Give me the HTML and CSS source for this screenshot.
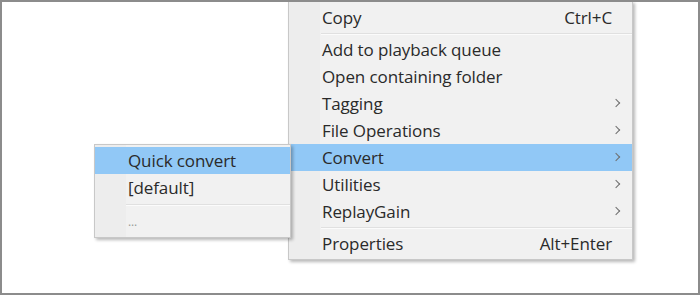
FILE: index.html
```html
<!DOCTYPE html>
<html lang="en">
<head>
    <meta charset="UTF-8">
    <title>Context menu - Convert</title>
    <link rel="stylesheet" href="styles.css">
</head>
<body>
    <div class="frame">
        <ul class="menu main-menu">
            <li class="item"><span class="label">Copy</span><span class="key">Ctrl+C</span></li>
            <li class="sep"></li>
            <li class="item"><span class="label">Add to playback queue</span></li>
            <li class="item"><span class="label">Open containing folder</span></li>
            <li class="item sub"><span class="label">Tagging</span></li>
            <li class="item sub"><span class="label">File Operations</span></li>
            <li class="item sub active"><span class="label">Convert</span></li>
            <li class="item sub"><span class="label">Utilities</span></li>
            <li class="item sub"><span class="label">ReplayGain</span></li>
            <li class="sep"></li>
            <li class="item"><span class="label">Properties</span><span class="key">Alt+Enter</span></li>
        </ul>

        <ul class="menu sub-menu">
            <li class="item active"><span class="label">Quick convert</span></li>
            <li class="item"><span class="label">[default]</span></li>
            <li class="sep"></li>
            <li class="item dots"><span class="label">...</span></li>
        </ul>
    </div>
</body>
</html>
```

FILE: styles.css
```css
html, body {
    margin: 0;
    padding: 0;
}
body {
    width: 700px;
    height: 295px;
    background: #fff;
    font-family: 'Open Sans', sans-serif;
    color: #2a2a2a;
}
.frame {
    position: relative;
    box-sizing: border-box;
    width: 700px;
    height: 295px;
    border: 2px solid #8c8c8c;
    overflow: hidden;
}
.menu {
    list-style: none;
    margin: 0;
    padding: 2px 0 2px 0;
    position: absolute;
    box-sizing: border-box;
    border: 1px solid #c8c8c8;
    background: linear-gradient(to right, #ededed 0, #ededed 31px, #f1f1f1 31px);
    box-shadow: 2px 2px 3px rgba(0, 0, 0, 0.28);
}
.main-menu {
    left: 286px;
    top: -1px;
    width: 345px;
}
.sub-menu {
    left: 92px;
    top: 142px;
    width: 197px;
    z-index: 2;
}
.item {
    display: flex;
    align-items: center;
    height: 27px;
    padding: 0 20px 0 33px;
    font-size: 17px;
    letter-spacing: -0.1px;
    position: relative;
}
.item .label {
    flex: 1;
}
.item.active {
    background: #91c8f6;
}
.sub::after {
    content: "";
    position: absolute;
    right: 13px;
    top: 10px;
    width: 5px;
    height: 5px;
    border-right: 1px solid #6e6e6e;
    border-top: 1px solid #6e6e6e;
    transform: rotate(45deg);
}
.sep {
    height: 5px;
    margin-left: 32px;
    background: linear-gradient(#f1f1f1 2px, #e0e0e0 2px, #e0e0e0 3px, #fbfbfb 3px, #fbfbfb 4px, #f1f1f1 4px);
}
.sub-menu .sep {
    height: 7px;
    margin-left: 31px;
    background: linear-gradient(#f1f1f1 3px, #e0e0e0 3px, #e0e0e0 4px, #fbfbfb 4px, #fbfbfb 5px, #f1f1f1 5px);
}
.dots {
    font-size: 12px;
    color: #999;
    align-items: flex-end;
    padding-bottom: 5px;
    box-sizing: border-box;
}
```
